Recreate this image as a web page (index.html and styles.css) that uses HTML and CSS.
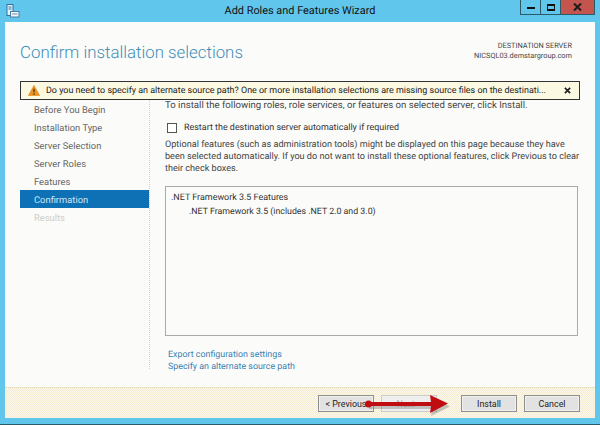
FILE: index.html
```html
<!DOCTYPE html>
<html lang="en">
<head>
<meta charset="utf-8">
<title>Add Roles and Features Wizard</title>
<link rel="stylesheet" href="styles.css">
</head>
<body>
<div class="window">
  <div class="titlebar">
    <svg class="app-icon" width="14" height="14" viewBox="0 0 14 14">
      <rect x="1" y="0.5" width="6" height="11" fill="#e8f4fb" stroke="#2f6f9f"/>
      <path d="M2.5 3H5.5M2.5 5H5.5" stroke="#2f6f9f"/>
      <rect x="4.5" y="7.5" width="8.5" height="5.5" fill="#f4f6f8" stroke="#4a7ea6"/>
      <path d="M6 10H11.5" stroke="#6d8ea8"/>
    </svg>
    <div class="title">Add Roles and Features Wizard</div>
    <div class="controls">
      <div class="ctl"><span class="min"></span></div>
      <div class="ctl"><span class="max"></span></div>
      <div class="ctl close"><svg width="9" height="8" viewBox="0 0 9 8"><path d="M1 .5L8 7.5M8 .5L1 7.5" stroke="#1b1b1b" stroke-width="2"/></svg></div>
    </div>
  </div>
  <div class="client">
    <header class="head">
      <h1>Confirm installation selections</h1>
      <div class="dest">
        <div>DESTINATION SERVER</div>
        <div>NICSQL03.demstargroup.com</div>
      </div>
    </header>
    <div class="warn">
      <svg class="warn-icon" width="12" height="11" viewBox="0 0 13 12"><path d="M6.5 .5L12.7 11.5H.3Z" fill="#f0961e" stroke="#d67c10" stroke-width=".6"/><path d="M6.5 4V8M6.5 9V10.5" stroke="#3a2a10" stroke-width="1.3"/></svg>
      <span class="warn-text">Do you need to specify an alternate source path? One or more installation selections are missing source files on the destinati...</span>
      <svg class="warn-x" width="7" height="7" viewBox="0 0 8 8"><path d="M1 1L7 7M7 1L1 7" stroke="#222" stroke-width="2"/></svg>
    </div>
    <div class="main">
      <nav class="side">
        <div class="step">Before You Begin</div>
        <div class="step">Installation Type</div>
        <div class="step">Server Selection</div>
        <div class="step">Server Roles</div>
        <div class="step">Features</div>
        <div class="step active">Confirmation</div>
        <div class="step off">Results</div>
      </nav>
      <section class="content">
        <p class="intro">To install the following roles, role services, or features on selected server, click Install.</p>
        <label class="check"><span class="box"></span>Restart the destination server automatically if required</label>
        <p class="optional">Optional features (such as administration tools) might be displayed on this page because they have<br>been selected automatically. If you do not want to install these optional features, click Previous to clear<br>their check boxes.</p>
        <div class="list">
          <div class="top">.NET Framework 3.5 Features</div>
          <div class="sub">.NET Framework 3.5 (includes .NET 2.0 and 3.0)</div>
        </div>
        <div class="links">
          <a>Export configuration settings</a>
          <a>Specify an alternate source path</a>
        </div>
      </section>
    </div>
    <footer class="foot">
      <button class="btn">&lt; Previous</button>
      <button class="btn dis">Next &gt;</button>
      <button class="btn gap">Install</button>
      <button class="btn">Cancel</button>
      <svg class="arrow" width="88" height="26" viewBox="0 0 88 26">
        <path d="M3 11L66 11L65 4L84 12.5L65 22L66 15L3 15Z" fill="#777" opacity=".4" transform="translate(1 2)"/>
        <circle cx="3.5" cy="12" r="3.5" fill="#c00d12"/>
        <path d="M3 10L66 10L65 3L83 11.5L65 21L66 14L3 14Z" fill="#c00d12"/>
      </svg>
    </footer>
  </div>
</div>
</body>
</html>
```
FILE: styles.css
```css
* { box-sizing: border-box; }
html, body { margin: 0; padding: 0; }
body { width: 600px; height: 425px; overflow: hidden; font-family: "Roboto", sans-serif; font-size: 9.4px; color: #444; text-rendering: geometricPrecision; }
.window { width: 600px; height: 425px; background: #61c6ec; display: flex; flex-direction: column; padding: 0 5px 6px; border-bottom: 1px solid #2b5a68; }
.titlebar { height: 22px; flex: none; display: flex; align-items: center; position: relative; }
.app-icon { margin-top: -1px; margin-left: 1px; }
.title { position: absolute; left: 0; right: 0; top: 3px; text-align: center; font-size: 10.9px; line-height: 16px; color: #111; }
.controls { position: absolute; right: 0; top: 0; display: flex; }
.ctl { width: 21px; height: 15px; border: 1px solid #2b5a68; border-top: 0; margin-left: -1px; display: flex; align-items: center; justify-content: center; }
.close { width: 35px; background: #c4544e; }
.min { width: 8px; height: 2px; margin-top: 2px; background: #111; }
.max { width: 8px; height: 7px; border: 1px solid #111; border-top-width: 2px; border-bottom-width: 2px; }
.client { flex: 1; background: #fbfcf9; display: flex; flex-direction: column; min-height: 0; }
.head { height: 59px; flex: none; padding: 0 23px 0 15px; display: flex; justify-content: space-between; }
.head h1 { margin: 18px 0 0; font-weight: 300; font-size: 16.85px; line-height: 26px; color: #3f8dbb; }
.dest { margin-top: 19px; text-align: right; font-size: 7.35px; line-height: 10px; color: #444; }
.warn { height: 19px; flex: none; margin: 0 15px; border: 1px solid #333; background: #fcf9e2; display: flex; align-items: center; padding: 0 8px 0 7px; }
.warn-icon, .warn-x { flex: none; }
.warn-text { margin-left: 6px; flex: 1; font-size: 8.95px; color: #222; white-space: nowrap; }
.main { flex: 1; display: flex; min-height: 0; }
.side { width: 130px; margin-left: 15px; flex: none; height: 269px; border-right: 1px dotted #cfcfcf; }
.step { height: 18px; line-height: 22px; padding-left: 14px; color: #666; }
.step.active { background: #0f71b5; color: #cfe3f2; }
.step.off { color: #ccc; }
.content { flex: 1; padding: 0 17px 0 15px; min-width: 0; }
.content p { margin: 0; color: #444; }
.content .intro { line-height: 12px; font-size: 9.6px; }
.check { display: flex; align-items: center; height: 14px; margin-top: 9px; color: #333; font-size: 8.95px; }
.box { width: 10px; height: 10px; border: 1px solid #555; background: #fff; margin: 0 7px 0 2px; }
.content .optional { line-height: 12px; margin-top: 4px; font-size: 9.1px; white-space: nowrap; }
.list { height: 150px; margin-top: 11px; border: 1px solid #aaa; padding: 4px 5px; line-height: 14px; color: #333; }
.top { font-size: 8.95px; }
.sub { padding-left: 18px; font-size: 8.8px; }
.links { margin-top: 13px; padding-left: 3px; display: flex; flex-direction: column; line-height: 12px; color: #3a7fb3; font-size: 8.9px; }
.foot { height: 31px; flex: none; background: repeating-conic-gradient(#f4ebd0 0 25%, #fbf9ee 0 50%) 0 0 / 2px 2px; border-top: 1px dotted #e3d7b5; display: flex; justify-content: flex-end; align-items: flex-start; padding: 7px 15px 0 0; position: relative; }
.btn { width: 56px; height: 17px; padding: 0; border: 1px solid #8f8f8f; background: #e2e2e2; font: inherit; font-size: 8.9px; color: #222; margin-left: 7px; box-shadow: inset 0 0 0 1px #f0f0f0; }
.btn.dis { border-color: #ccc; color: #aaa; background: #eee; }
.btn.gap { margin-left: 24px; }
.arrow { position: absolute; left: 360px; top: 4px; }
```
